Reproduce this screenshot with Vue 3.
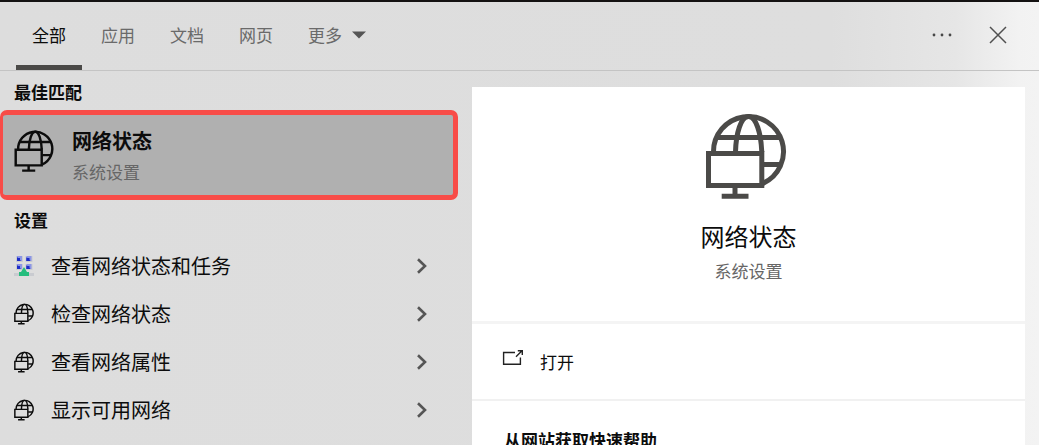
<script setup>
import { ref } from 'vue'

const tabs = ['全部', '应用', '文档', '网页']
const active = ref('全部')
const results = [
  { label: '查看网络状态和任务', icon: 'center' },
  { label: '检查网络状态', icon: 'globe' },
  { label: '查看网络属性', icon: 'globe' },
  { label: '显示可用网络', icon: 'globe' },
]
</script>

<template>
  <div class="search">
    <svg class="defs" aria-hidden="true">
      <symbol id="net-globe" viewBox="0 0 82 86">
        <g fill="none" stroke="currentColor">
          <path d="M8.5 39A35 35 0 1 1 58 70.4" />
          <path d="M30.5 39C31 20 36 3.5 43.5 3.5S56 20 56.8 39" />
          <path d="M12 24.5H75M58 51.5H75.5" />
          <path d="M3.5 40.5H56.8V72.5H3.5Z" />
          <path d="M30 73V82M16.7 83.2H43.5" />
        </g>
      </symbol>
      <symbol id="net-center" viewBox="0 0 20 22">
        <path fill="#c9cbd0" d="M2 1h7v6H2zM11.5 1h7v6h-7zM2 9h7v6H2zM11.5 9h7v6h-7zM0 18h20v3H0z" />
        <path fill="#8d97e6" d="M3 1h5v5H3zM12.5 1h5v5h-5zM3 9h5v5H3zM12.5 9h5v5h-5z" />
        <path fill="#1c2bc8" d="M3 2l4 4H3zM12.5 2l4 4h-4zM3 10l4 4H3zM12.5 10l4 4h-4z" />
        <path fill="#1c2bc8" d="M3 3h3v3H3zM12.5 3h3v3h-3zM3 11h3v3H3zM12.5 11h3v3h-3z" />
        <path fill="#25bd7d" d="M10 12l3 5H15v4H5v-4h2z" />
      </symbol>
    </svg>

    <header class="bar">
      <nav class="tabs">
        <button
          v-for="t in tabs"
          :key="t"
          type="button"
          class="tab"
          :class="{ active: active === t }"
          @click="active = t"
        >{{ t }}</button>
        <button type="button" class="tab more">
          更多
          <svg width="14" height="8" viewBox="0 0 14 8" aria-hidden="true"><path fill="#555" d="M0 0.5H14L7 7.5Z" /></svg>
        </button>
      </nav>
      <div class="actions">
        <button type="button" class="action" aria-label="选项">
          <svg width="20" height="4" viewBox="0 0 20 4" fill="#484848" aria-hidden="true"><circle cx="2" cy="2" r="1.4" /><circle cx="10" cy="2" r="1.4" /><circle cx="18" cy="2" r="1.4" /></svg>
        </button>
        <button type="button" class="action" aria-label="关闭">
          <svg width="18" height="18" viewBox="0 0 18 18" fill="none" stroke="#505050" stroke-width="1.5" aria-hidden="true"><path d="M1 1L17 17M17 1L1 17" /></svg>
        </button>
      </div>
    </header>

    <main class="body">
      <section class="list">
        <h2 class="group">最佳匹配</h2>
        <button type="button" class="best">
          <svg class="best-icon" aria-hidden="true"><use href="#net-globe" /></svg>
          <span class="best-text">
            <span class="best-title">网络状态</span>
            <span class="sub">系统设置</span>
          </span>
        </button>
        <h2 class="group settings">设置</h2>
        <button v-for="r in results" :key="r.label" type="button" class="row">
          <svg class="row-icon" aria-hidden="true"><use :href="'#net-' + r.icon" /></svg>
          <span class="row-label">{{ r.label }}</span>
          <svg width="12" height="16" viewBox="0 0 12 16" fill="none" stroke="#555" stroke-width="2.6" aria-hidden="true"><path d="M2 1.2L9 8L2 14.8" /></svg>
        </button>
      </section>

      <section class="detail">
        <div class="hero">
          <svg class="hero-icon" aria-hidden="true"><use href="#net-globe" /></svg>
          <h1 class="hero-title">网络状态</h1>
          <span class="sub">系统设置</span>
        </div>
        <button type="button" class="open">
          <svg width="22" height="18" viewBox="0 0 22 18" fill="none" stroke="#222" stroke-width="1.4" aria-hidden="true">
            <path d="M13 3.5H1.6V15.3H18.4V8.5" />
            <path d="M14 7.8L19.5 2.3M15.8 1.7H20.3V6" />
          </svg>
          <span>打开</span>
        </button>
        <div class="help">
          <h2 class="help-title">从网站获取快速帮助</h2>
        </div>
      </section>
    </main>
  </div>
</template>

<style>
body {
  margin: 0;
}
</style>

<style scoped>
.search {
  display: flex;
  flex-direction: column;
  box-sizing: border-box;
  height: 100vh;
  overflow: hidden;
  border-top: 2px solid #141212;
  background: linear-gradient(90deg, #dddddd 0%, #dedede 80%, #e6e6e6 92%, #f2f2f2 98%, #f3f3f3 100%);
  color: #0c0c0c;
  font-family: "Noto Sans CJK SC", sans-serif;
  font-size: 17px;
  line-height: 24px;
}
.defs {
  position: absolute;
  width: 0;
  height: 0;
}
button {
  border: 0;
  padding: 0;
  background: none;
  color: inherit;
  font: inherit;
  text-align: left;
  cursor: pointer;
}
h1,
h2 {
  margin: 0;
}
svg {
  flex: none;
}
.bar {
  display: flex;
  flex: none;
  justify-content: space-between;
  height: 68px;
  border-bottom: 1px solid #c4c4c4;
}
.tabs {
  display: flex;
  gap: 3px;
  padding-left: 16px;
}
.tab {
  box-sizing: border-box;
  padding: 3px 16px 0;
  border-bottom: 5px solid transparent;
  color: #6a6a6a;
}
.tab.active {
  border-bottom-color: #4b4a48;
  color: #0c0c0c;
}
.more {
  display: flex;
  align-items: center;
  gap: 10px;
}
.actions {
  display: flex;
  align-items: center;
  padding: 0 13px 2px 0;
}
.action {
  display: flex;
  align-items: center;
  justify-content: center;
  width: 56px;
  height: 48px;
}
.body {
  display: grid;
  flex: 1;
  grid-template-columns: 458px 1fr;
  gap: 14px;
  min-height: 0;
  padding-right: 14px;
}
.list {
  display: flex;
  flex-direction: column;
}
.group {
  padding: 9px 14px 6px;
  font-size: 17px;
  font-weight: 700;
}
.best {
  display: flex;
  align-items: center;
  gap: 18px;
  box-sizing: border-box;
  height: 90px;
  padding-left: 11px;
  border: 5px solid #f84c48;
  border-left-width: 3px;
  border-radius: 7px;
  background: #b0b0b0;
}
.best-icon {
  width: 40px;
  height: 42px;
  margin-bottom: 8px;
  stroke-width: 5;
}
.best-text {
  display: flex;
  flex-direction: column;
  gap: 7px;
  padding-top: 3px;
}
.best-title {
  font-size: 20px;
  font-weight: 700;
}
.sub {
  color: #666;
}
.settings {
  padding: 8px 14px 10px;
}
.row {
  display: flex;
  align-items: center;
  gap: 17px;
  height: 48px;
  padding: 0 30px 0 14px;
  font-size: 20px;
}
.row-icon {
  width: 20px;
  height: 22px;
  stroke-width: 6;
}
.row-label {
  flex: 1;
}
.detail {
  display: flex;
  flex-direction: column;
  margin-top: 16px;
  background: #fff;
}
.hero {
  display: flex;
  flex: none;
  flex-direction: column;
  align-items: center;
  box-sizing: border-box;
  height: 237px;
  padding-top: 26px;
  border-bottom: 3px solid #f4f4f4;
}
.hero-icon {
  width: 82px;
  height: 86px;
  margin-right: 6px;
  color: #4b4a48;
  stroke-width: 5;
}
.hero-title {
  margin: 21px 0 7px;
  font-size: 24px;
  font-weight: 400;
  line-height: 32px;
}
.open {
  display: flex;
  flex: none;
  align-items: center;
  gap: 16px;
  box-sizing: border-box;
  height: 77px;
  padding-left: 30px;
  border-bottom: 2px solid #f1f1f1;
}
.open svg {
  margin-bottom: 8px;
}
.help {
  padding: 27px 32px;
}
.help-title {
  font-size: 17px;
  font-weight: 700;
}
</style>
